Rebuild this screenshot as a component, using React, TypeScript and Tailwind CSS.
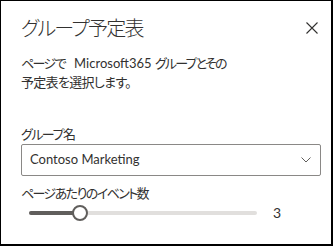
const font = { fontFamily: 'Lato, "Noto Sans CJK JP", sans-serif' }

const Chevron = () => (
    <svg width="10" height="6" viewBox="0 0 10 6" className="shrink-0">
        <path d="M0.5 0.5 L5 5 L9.5 0.5" fill="none" stroke="#605e5c" strokeWidth="1" />
    </svg>
)

const CloseIcon = () => (
    <svg width="12" height="12" viewBox="0 0 12 12">
        <path d="M0.5 0.5 L11.5 11.5 M11.5 0.5 L0.5 11.5" fill="none" stroke="#323130" strokeWidth="1.1" />
    </svg>
)

const Slider = ({ value, pct }: { value: number, pct: number }) => {
    return (
        <div className="flex items-center h-[20px] pl-[8px]">
            <div className="relative w-[228px] h-[4px] rounded-full bg-[#e1dfdd]">
                <div className="absolute left-0 top-0 h-full rounded-full bg-[#605e5c]" style={{ width: `${pct}%` }} />
                <div
                    className="absolute top-1/2 w-[16px] h-[16px] -translate-x-1/2 -translate-y-1/2 rounded-full bg-white border-2 border-[#605e5c]"
                    style={{ left: `${pct}%` }}
                />
            </div>
            <span className="ml-[16px] text-[14px] leading-[20px] text-[#323130]">{value}</span>
        </div>
    )
}

const App = () => {
    return (
        <div
            className="w-[333px] h-[246px] bg-white border-l border-t border-r-2 border-b-2 border-black pl-[20px] pr-[10px] pt-[13px] flex flex-col text-[#323130] [font-feature-settings:'palt']"
            style={font}
        >
            <div className="flex items-center h-[28px] pr-[3px]">
                <h1 className="flex-1 text-[20px] leading-[28px] font-light tracking-[-1.7px]">グループ予定表</h1>
                <CloseIcon />
            </div>
            <p className="mt-[12px] text-[13px] leading-[19px]">
                <span className="tracking-[-1.6px]">ページで</span>
                <span className="ml-[9px]">Microsoft365</span>{' '}
                <span className="tracking-[-1.8px]">グループとその</span>
                <br />
                <span className="tracking-[-0.7px]">予定表を選択します。</span>
            </p>
            <div className="mt-[33px] text-[13px] leading-[19px] tracking-[-1.5px]">グループ名</div>
            <div className="w-[300px] h-[32px] border border-[#8a8886] rounded-[2px] flex items-center pl-[8px] pr-[9px]">
                <span className="flex-1 text-[13px]">Contoso Marketing</span>
                <Chevron />
            </div>
            <div className="mt-[8px] text-[13px] leading-[19px] tracking-[-1.6px]">ページあたりのイベント数</div>
            <Slider value={3} pct={22.4} />
        </div>
    )
}

export default App
